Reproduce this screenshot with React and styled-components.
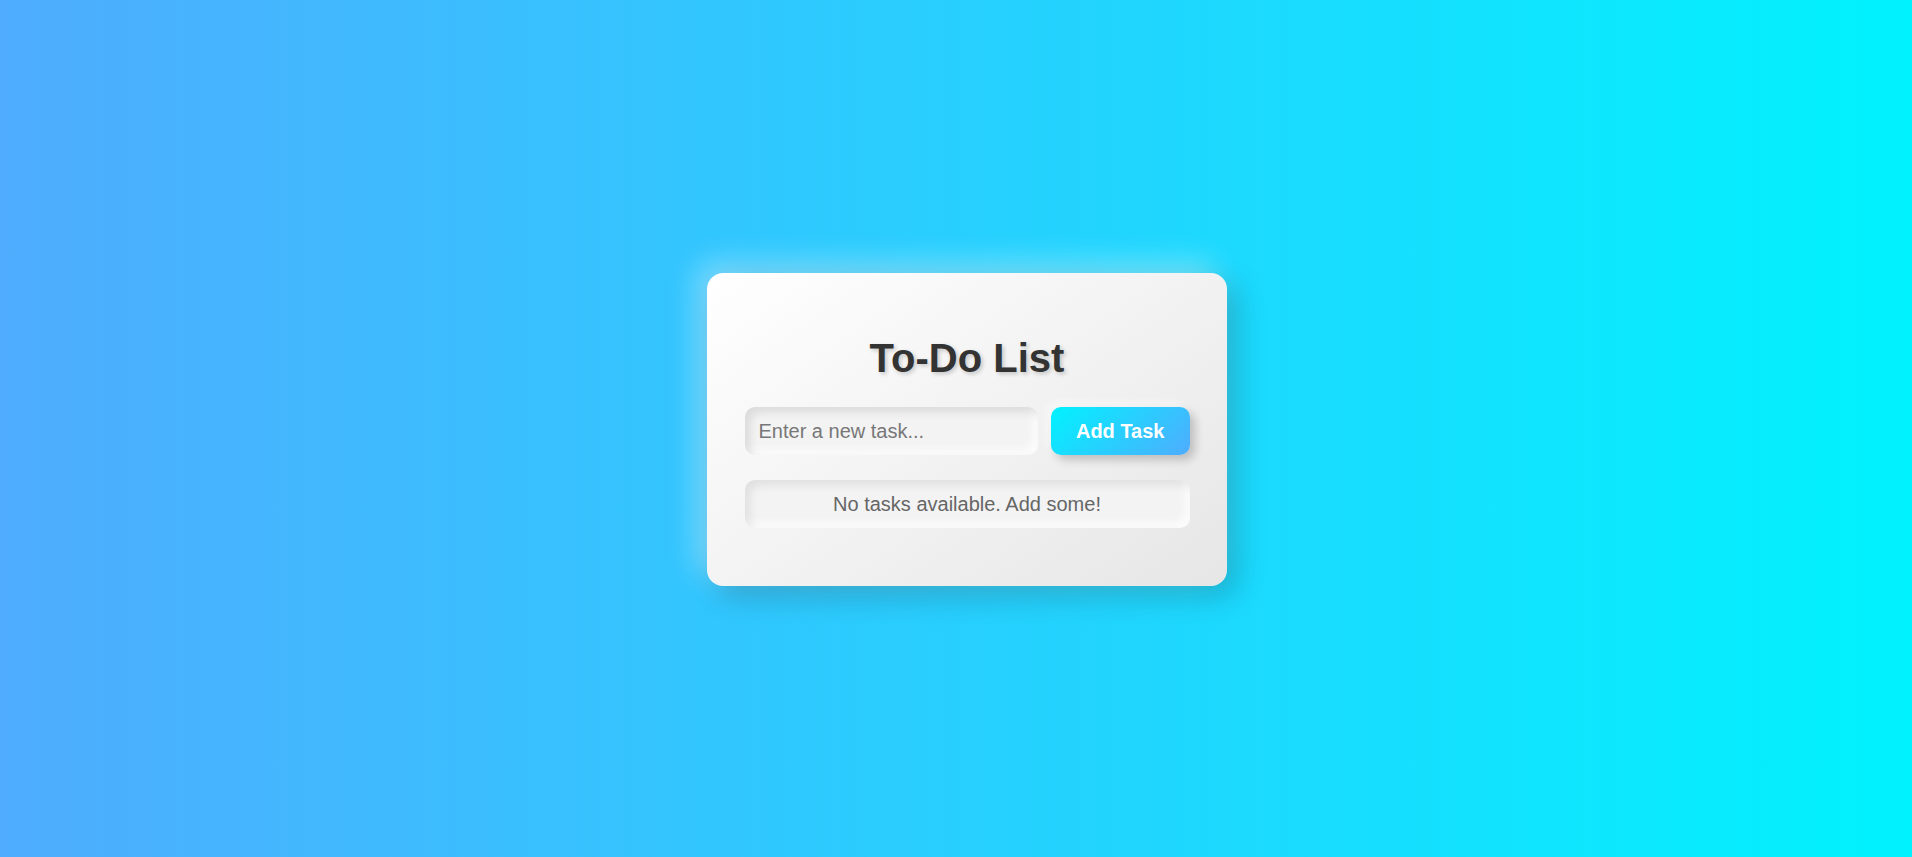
import React, { useState } from 'react';
import styled, { createGlobalStyle } from 'styled-components';

const GlobalStyle = createGlobalStyle`
  html, body {
    margin: 0;
    padding: 0;
    height: 100%;
  }
  body {
    font-family: 'Liberation Sans', Arial, sans-serif;
    background: linear-gradient(to right, #4facfe, #00f2fe);
  }
  #root {
    height: 100%;
  }
`;

const Page = styled.div`
  min-height: 100vh;
  display: flex;
  align-items: center;
  justify-content: center;
  padding: 2px 0 0 22px;
  box-sizing: border-box;
`;

const Card = styled.div`
  width: 520px;
  box-sizing: border-box;
  padding: 63px 37.5px 58px;
  border-radius: 16px;
  background: linear-gradient(145deg, #ffffff, #e6e6e6);
  box-shadow: 10px 10px 30px rgba(0, 0, 0, 0.2),
    -10px -10px 30px rgba(255, 255, 255, 0.4);
`;

const Title = styled.h1`
  margin: 0 0 26px;
  text-align: center;
  font-size: 40px;
  font-weight: 700;
  color: #333;
  text-shadow: 2px 2px 4px rgba(0, 0, 0, 0.2);
`;

const InputRow = styled.div`
  display: flex;
  gap: 13px;
  margin-bottom: 25px;
`;

const TaskInput = styled.input`
  flex: 1;
  min-width: 0;
  border: none;
  outline: none;
  padding: 12px 14px;
  line-height: 24px;
  font-size: 20px;
  font-family: inherit;
  color: #333;
  border-radius: 10px;
  background: #f3f3f3;
  box-shadow: inset 5px 5px 10px rgba(0, 0, 0, 0.1),
    inset -5px -5px 10px rgba(255, 255, 255, 0.8);

  &::placeholder {
    color: #777;
  }
`;

const AddButton = styled.button`
  border: none;
  padding: 12px 25px;
  line-height: 24px;
  font-size: 20px;
  font-weight: 700;
  font-family: inherit;
  color: #fff;
  border-radius: 10px;
  cursor: pointer;
  background: linear-gradient(135deg, #00f2fe, #4facfe);
  box-shadow: 5px 5px 10px rgba(0, 0, 0, 0.2),
    -5px -5px 10px rgba(255, 255, 255, 0.5);
`;

const TaskList = styled.ul`
  list-style: none;
  margin: 0;
  padding: 0;
`;

const EmptyMessage = styled.li`
  padding: 12px;
  line-height: 24px;
  text-align: center;
  font-size: 20px;
  color: #666;
  border-radius: 10px;
  background: #f3f3f3;
  box-shadow: inset 5px 5px 10px rgba(0, 0, 0, 0.08),
    inset -5px -5px 10px rgba(255, 255, 255, 0.8);
`;

export default function App() {
  const [text, setText] = useState('');
  const [tasks, setTasks] = useState([]);

  const addTask = () => {
    if (!text.trim()) return;
    setTasks([...tasks, text.trim()]);
    setText('');
  };

  return (
    <>
      <GlobalStyle />
      <Page>
        <Card>
          <Title>To-Do List</Title>
          <InputRow>
            <TaskInput
              placeholder="Enter a new task..."
              value={text}
              onChange={(e) => setText(e.target.value)}
            />
            <AddButton onClick={addTask}>Add Task</AddButton>
          </InputRow>
          <TaskList>
            {tasks.length === 0 ? (
              <EmptyMessage>No tasks available. Add some!</EmptyMessage>
            ) : (
              tasks.map((t, i) => <EmptyMessage key={i}>{t}</EmptyMessage>)
            )}
          </TaskList>
        </Card>
      </Page>
    </>
  );
}
